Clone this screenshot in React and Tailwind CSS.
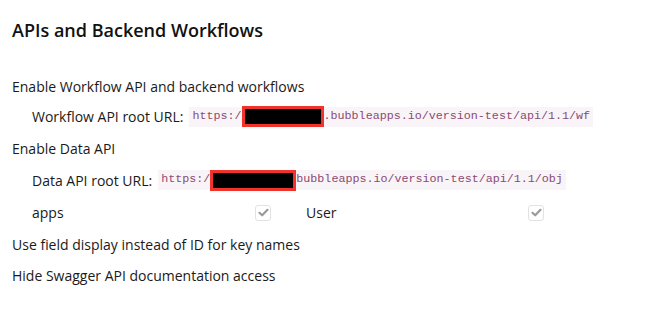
import React from 'react'

function Code({ children }) {
  return (
    <span className="inline-flex items-center bg-[#f9f4f7] px-[3px] h-[20px] text-[11.7px] text-[#8a4a72] font-['Liberation_Mono',monospace]">
      {children}
    </span>
  )
}

function Redacted({ w }) {
  return (
    <span className={`inline-block h-[21px] border-[3px] border-[#f0342c] bg-black ${w}`} />
  )
}

function Check() {
  return (
    <span className="w-[16px] h-[16px] rounded-[3px] border border-[#e2e2e2] bg-white flex items-center justify-center">
      <svg width="11" height="9" viewBox="0 0 11 9">
        <path d="M1.5 4.8 L4.2 7.3 L9.5 1.8" fill="none" stroke="#9a9a9a" strokeWidth="2.2" strokeLinecap="round" strokeLinejoin="round" />
      </svg>
    </span>
  )
}

export default function App() {
  return (
    <div className="w-[664px] h-[319px] bg-white font-['Open_Sans',sans-serif] text-[#1a1a1a] text-[14px]">
      <div className="pt-[18px] px-[12px]">
        <h1 className="text-[18px] font-semibold text-[#111] leading-[24px]">APIs and Backend Workflows</h1>

        <div className="mt-[29px] flex flex-col">
          <div className="h-[30px] flex items-center">Enable Workflow API and backend workflows</div>
          <div className="h-[31px] flex items-center pl-[20px]">
            <span className="mr-[6px]">Workflow API root URL:</span>
            <Code>
              https:/<Redacted w="w-[82px]" />.bubbleapps.io/version-test/api/1.1/wf
            </Code>
          </div>
          <div className="h-[32px] flex items-center">Enable Data API</div>
          <div className="h-[32px] flex items-center pl-[20px]">
            <span className="mr-[6px]">Data API root URL:</span>
            <Code>
              https:/<Redacted w="w-[86px]" />bubbleapps.io/version-test/api/1.1/obj
            </Code>
          </div>
          <div className="h-[33px] flex items-center pl-[20px]">
            <span className="w-[223px]">apps</span>
            <Check />
            <span className="ml-[35px] w-[222px]">User</span>
            <Check />
          </div>
          <div className="h-[31px] flex items-center">Use field display instead of ID for key names</div>
          <div className="h-[30px] flex items-center">Hide Swagger API documentation access</div>
        </div>
      </div>
    </div>
  )
}
